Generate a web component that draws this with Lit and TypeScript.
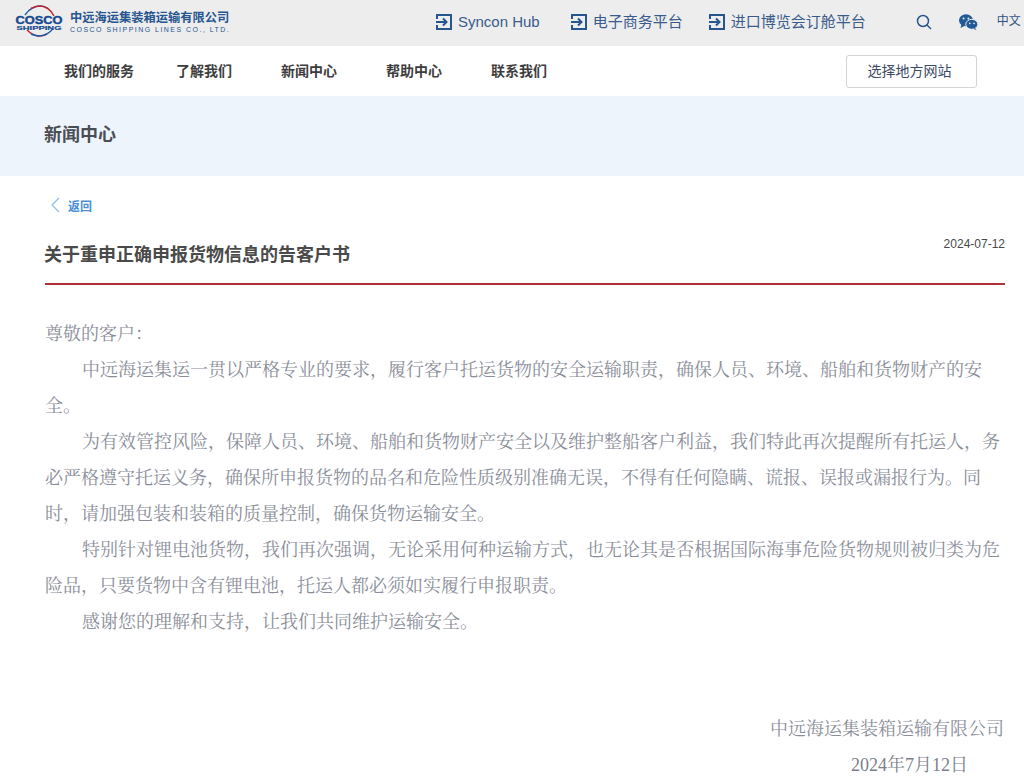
import { LitElement, html, css } from "lit";
import { customElement } from "lit/decorators.js";

const enter = html`<svg class="ent" viewBox="0 0 16 16" width="16" height="16"><path d="M1 5V1h14v14H1v-4" fill="none" stroke="#26558f" stroke-width="2"/><path d="M0 8h10M7 4.5 10.5 8 7 11.5" fill="none" stroke="#26558f" stroke-width="2"/></svg>`;

@customElement("app-root")
export class AppRoot extends LitElement {
  static styles = css`
    :host { display: block; height: 782px; overflow: hidden; background: #fff; font-family: "Liberation Sans", "Noto Sans CJK SC", sans-serif; }
    .top { height: 46px; background: #ededed; display: flex; align-items: center; padding: 0 0 2px 15px; box-sizing: border-box; white-space: nowrap; }
    .logo { flex: none; width: 48px; height: 34px; }
    .brand { margin-left: 7px; width: 166px; color: #26558f; flex: none; }
    .brand .cn { font-size: 12.25px; line-height: 14px; font-weight: 700; color: #26558f; }
    .brand .en { font-size: 7px; line-height: 8px; letter-spacing: 1.47px; margin-top: 1px; }
    .links { margin-left: 200px; display: flex; align-items: center; flex: none; }
    .lnk { display: flex; align-items: center; gap: 6px; font-size: 15px; line-height: 18px; color: #3a5b8c; margin-right: 31px; }
    .lnk:nth-child(2) { margin-right: 26px; }
    .lnk:nth-child(3) { margin-right: 0; }
    .search { margin-left: 50px; flex: none; }
    .wechat { margin-left: 27px; flex: none; }
    .lang { margin: 0 0 3px 19px; font-size: 12px; line-height: 14px; color: #30527f; }
    .nav { height: 50px; display: flex; align-items: center; padding: 0 47px 0 64px; }
    .nav a { font-size: 14px; font-weight: 700; color: #3d3d3d; margin-right: 49px; white-space: nowrap; position: relative; top: -1px; }
    .nav a:first-child { margin-right: 42px; }
    .sel { margin-left: auto; width: 131px; height: 33px; box-sizing: border-box; padding: 0 4px 2px 0; border: 1px solid #d2d4d8; border-radius: 3px; display: flex; align-items: center; justify-content: center; font-size: 14px; color: #3a4a66; }
    .band { height: 80px; box-sizing: border-box; padding: 0 0 7px 44px; background: #edf4fb; display: flex; align-items: center; font-size: 18px; font-weight: 700; color: #4a4d55; }
    .main { padding: 0 19px 0 45px; }
    .back { display: flex; align-items: center; padding: 20px 0 0 5px; height: 18px; font-size: 12px; font-weight: 700; color: #4a8fd8; gap: 8px; }
    .head { display: flex; justify-content: space-between; height: 71px; border-bottom: 2px solid #b0313c; box-sizing: border-box; }
    h1 { margin: 26px 0 0 -1px; font-size: 18px; line-height: 30px; font-weight: 700; color: #4a4a4a; }
    .date { font-size: 12px; color: #4a4a4a; margin-top: 23px; }
    .body { margin: 31px 1px 0 0; font-family: "Liberation Serif", "Noto Serif CJK SC", "Noto Sans CJK SC", serif; font-size: 18px; line-height: 36px; color: #8a8e99; }
    .body p { margin: 0; }
    .body .ind { text-indent: 37px; }
    .body .sign { text-align: right; margin-top: 71px; }
    .body .d2 { text-align: right; padding-right: 36px; color: #7b7f8c; }
  `;
  render() {
    return html`
      <div class="top">
        <svg class="logo" viewBox="0 0 48 34">
          <path d="M10 10C14 4 20 1 26 1 29 1 31 2 33 3.5" fill="none" stroke="#1a5fa8" stroke-width="1.4"/>
          <path d="M16 3.5C19 2 21 1 24 1 31 1 36 5 39 11" fill="none" stroke="#c8232c" stroke-width="1.4"/>
          <path d="M12 25C16 29 20 31 24 31 27 31 30 30 32 29" fill="none" stroke="#c8232c" stroke-width="1.4"/>
          <path d="M16 29C19 30 22 31 24 31 29 31 33 29 37 25" fill="none" stroke="#1a5fa8" stroke-width="1.4"/>
          <text x="24" y="18.5" text-anchor="middle" textLength="47" lengthAdjust="spacingAndGlyphs" font-family="Liberation Sans" font-weight="700" font-size="10.5" fill="#174a8f" stroke="#174a8f" stroke-width=".4">COSCO</text>
          <text x="24" y="25" text-anchor="middle" textLength="45" lengthAdjust="spacingAndGlyphs" font-family="Liberation Sans" font-weight="700" font-size="6" fill="#174a8f" stroke="#174a8f" stroke-width=".2">SHIPPING</text>
        </svg>
        <div class="brand"><div class="cn">中远海运集装箱运输有限公司</div><div class="en">COSCO SHIPPING LINES CO., LTD.</div></div>
        <div class="links">
          <div class="lnk">${enter}Syncon Hub</div>
          <div class="lnk">${enter}电子商务平台</div>
          <div class="lnk">${enter}进口博览会订舱平台</div>
        </div>
        <svg class="search" viewBox="0 0 16 16" width="16" height="16"><circle cx="7" cy="7" r="5.5" fill="none" stroke="#26558f" stroke-width="1.5"/><path d="M11 11l4 4" stroke="#26558f" stroke-width="1.5"/></svg>
        <svg class="wechat" viewBox="0 0 19 16" width="19" height="16"><ellipse cx="7" cy="6.2" rx="7" ry="6" fill="#1f5a96"/><path d="M2.5 10l-1 4 4-2z" fill="#1f5a96"/><ellipse cx="12.8" cy="10.3" rx="6" ry="5" fill="#1f5a96" stroke="#ededed"/><path d="M16 14l1.5 2-3-1z" fill="#1f5a96"/><circle cx="4.6" cy="4.6" r="1" fill="#ededed"/><circle cx="9.4" cy="4.6" r="1" fill="#ededed"/><circle cx="10.8" cy="9.4" r=".8" fill="#ededed"/><circle cx="15" cy="9.4" r=".8" fill="#ededed"/></svg>
        <div class="lang">中文</div>
      </div>
      <div class="nav">
        <a>我们的服务</a><a>了解我们</a><a>新闻中心</a><a>帮助中心</a><a>联系我们</a>
        <div class="sel">选择地方网站</div>
      </div>
      <div class="band">新闻中心</div>
      <div class="main">
        <div class="back"><svg viewBox="0 0 10 16" width="10" height="16"><path d="M9 1 2 8l7 7" fill="none" stroke="#8dbcf0" stroke-width="1.2"/></svg>返回</div>
        <div class="head"><h1>关于重申正确申报货物信息的告客户书</h1><div class="date">2024-07-12</div></div>
        <div class="body">
          <p>尊敬的客户：</p>
          <p class="ind">中远海运集运一贯以严格专业的要求，履行客户托运货物的安全运输职责，确保人员、环境、船舶和货物财产的安全。</p>
          <p class="ind">为有效管控风险，保障人员、环境、船舶和货物财产安全以及维护整船客户利益，我们特此再次提醒所有托运人，务必严格遵守托运义务，确保所申报货物的品名和危险性质级别准确无误，不得有任何隐瞒、谎报、误报或漏报行为。同时，请加强包装和装箱的质量控制，确保货物运输安全。</p>
          <p class="ind">特别针对锂电池货物，我们再次强调，无论采用何种运输方式，也无论其是否根据国际海事危险货物规则被归类为危险品，只要货物中含有锂电池，托运人都必须如实履行申报职责。</p>
          <p class="ind">感谢您的理解和支持，让我们共同维护运输安全。</p>
          <p class="sign">中远海运集装箱运输有限公司</p>
          <p class="d2">2024年7月12日</p>
        </div>
      </div>
    `;
  }
}
